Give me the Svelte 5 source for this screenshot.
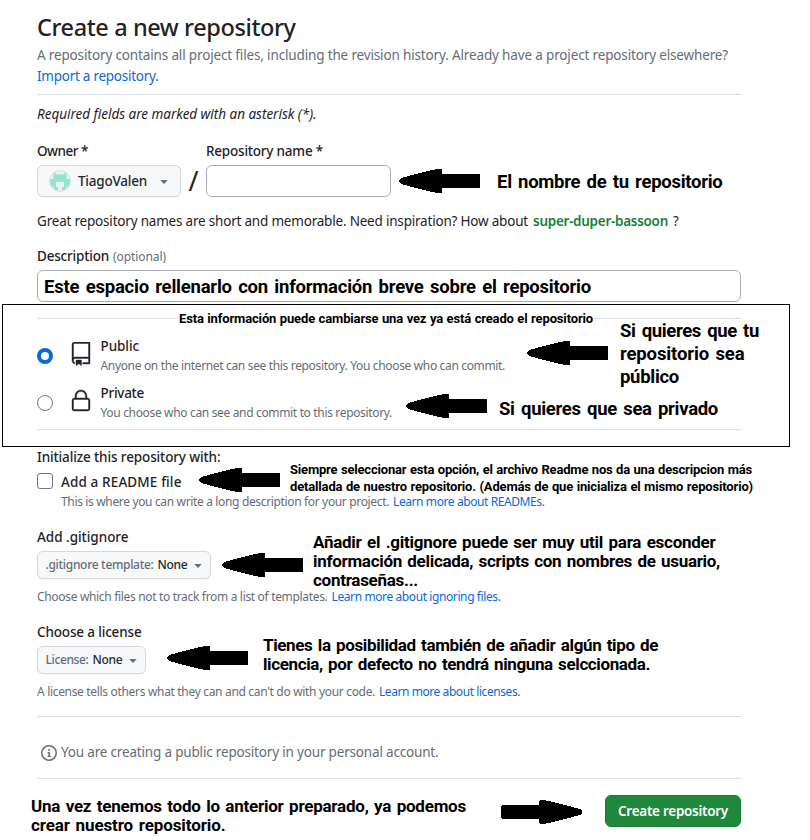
<script>
  // Spreads the letters of a line so that it takes up the given width.
  function fit(node, width) {
    const natural = node.getBoundingClientRect().width;
    node.style.letterSpacing = `${(width - natural) / node.textContent.length}px`;
  }

  const notes = [
    { x: 497, y: 171, size: 'large', lines: [['El nombre de tu repositorio', 225.5]] },
    { x: 44, y: 276, size: 'large', lines: [['Este espacio rellenarlo con información breve sobre el repositorio', 547]] },
    { x: 179, y: 310, size: 'small', lines: [['Esta información puede cambiarse una vez ya está creado el repositorio', 414]] },
    { x: 620, y: 320, size: 'large', lines: [['Si quieres que tu', 139], ['repositorio sea', 124.5], ['público', 59]] },
    { x: 499, y: 398, size: 'large', lines: [['Si quieres que sea privado', 219]] },
    { x: 290, y: 461, size: 'small', lines: [['Siempre seleccionar esta opción, el archivo Readme nos da una descripcion más', 462], ['detallada de nuestro repositorio. (Además de que inicializa el mismo repositorio)', 463]] },
    { x: 313, y: 533, size: 'medium', lines: [['Añadir el .gitignore puede ser muy util para esconder', 402.5], ['información delicada, scripts con nombres de usuario,', 407], ['contraseñas...', 105]] },
    { x: 263, y: 636, size: 'medium', lines: [['Tienes la posibilidad también de añadir algún tipo de', 395], ['licencia, por defecto no tendrá ninguna selccionada.', 387]] },
    { x: 31, y: 797, size: 'medium', lines: [['Una vez tenemos todo lo anterior preparado, ya podemos', 435], ['crear nuestro repositorio.', 194.5]] },
  ];

  const arrows = [
    { x: 399, y: 169 },
    { x: 527, y: 341 },
    { x: 406, y: 394 },
    { x: 199, y: 468 },
    { x: 222, y: 553 },
    { x: 167, y: 646 },
    { x: 501, y: 800, right: true },
  ];
</script>

{#snippet caret()}
  <svg class="caret" width="8" height="4" viewBox="0 0 8 4"><path d="M0.3 0h7.4L4.3 3.7a.45.45 0 0 1-.6 0Z" /></svg>
{/snippet}

<div class="page">
  <main>
    <h1><span use:fit={258.5}>Create a new repository</span></h1>
    <p class="lead muted">
      <span use:fit={691}>A repository contains all project files, including the revision history. Already have a project repository elsewhere?</span>
    </p>
    <p class="lead"><a href="#import" use:fit={121.5}>Import a repository.</a></p>
    <hr class="after-lead" />

    <p class="required"><span use:fit={279.5}>Required fields are marked with an asterisk (*).</span></p>

    <div class="names">
      <div class="owner">
        <div class="label"><span use:fit={51}>Owner *</span></div>
        <button class="select">
          <svg class="avatar" width="22" height="22" viewBox="0 0 22 22">
            <defs><clipPath id="round"><circle cx="11" cy="11" r="10" /></clipPath></defs>
            <circle cx="11" cy="11" r="10.4" fill="#f0f0f0" stroke="#d9dce0" stroke-width="1" />
            <g clip-path="url(#round)">
              <path fill="#93e6cd" d="M3.500 2h3v2.500h9V2h3v2.500H17.700V9H21v8h-4v3h-4v-3h2v-5H7v5h2v3H5v-3H1V9H4.300V4.500H3.500Z" />
            </g>
          </svg>
          <span class="user"><span use:fit={69}>TiagoValen</span></span>
          {@render caret()}
        </button>
      </div>
      <span class="slash">/</span>
      <div class="repo">
        <div class="label"><span use:fit={117}>Repository name *</span></div>
        <div class="input"></div>
      </div>
    </div>

    <p class="hint">
      <span use:fit={491}>Great repository names are short and memorable. Need inspiration? How about</span>
      <b use:fit={135}>super-duper-bassoon</b>
      <span>?</span>
    </p>

    <div class="label description">
      <span use:fit={72}>Description</span>
      <small use:fit={53}>(optional)</small>
    </div>
    <div class="input wide"></div>
    <hr class="after-description" />

    <div class="choice">
      <i class="radio checked"></i>
      <svg width="24" height="24" viewBox="0 0 24 24"><path d="M3 2.750A2.750 2.750 0 0 1 5.750 0h14.500a.75.75 0 0 1 .75.75v20.500a.75.75 0 0 1-.75.75h-6a.75.75 0 0 1 0-1.500h5.250v-4H6A1.500 1.500 0 0 0 4.500 18v.75c0 .716.43 1.334 1.050 1.605a.75.75 0 0 1-.6 1.374A3.251 3.251 0 0 1 3 18.750ZM19.500 1.500H5.750c-.69 0-1.250.56-1.250 1.250v12.651A2.989 2.989 0 0 1 6 15h13.500Z" /><path d="M7 18.250a.25.25 0 0 1 .25-.25h5a.25.25 0 0 1 .25.25v5.010a.25.25 0 0 1-.397.201l-2.206-1.604a.25.25 0 0 0-.294 0L7.397 23.460a.25.25 0 0 1-.397-.2v-5.010Z" /></svg>
      <div>
        <div class="label"><span use:fit={38.5}>Public</span></div>
        <p class="note"><span use:fit={404.5}>Anyone on the internet can see this repository. You choose who can commit.</span></p>
      </div>
    </div>
    <div class="choice">
      <i class="radio"></i>
      <svg width="24" height="24" viewBox="0 0 24 24"><path d="M6 9V7.250C6 3.845 8.503 1 12 1s6 2.845 6 6.250V9h.5a2.500 2.500 0 0 1 2.500 2.500v8a2.500 2.500 0 0 1-2.500 2.500h-13A2.500 2.500 0 0 1 3 19.500v-8A2.500 2.500 0 0 1 5.500 9Zm-1.500 2.500v8a1 1 0 0 0 1 1h13a1 1 0 0 0 1-1v-8a1 1 0 0 0-1-1h-13a1 1 0 0 0-1 1Zm3-4.250V9h9V7.250c0-2.670-1.922-4.750-4.500-4.750-2.578 0-4.500 2.080-4.500 4.750Z" /></svg>
      <div>
        <div class="label"><span use:fit={43.5}>Private</span></div>
        <p class="note"><span use:fit={291.5}>You choose who can see and commit to this repository.</span></p>
      </div>
    </div>
    <hr class="after-choices" />

    <div class="label init"><span use:fit={183.5}>Initialize this repository with:</span></div>
    <div class="readme">
      <i class="checkbox"></i>
      <div>
        <div class="label"><span use:fit={120.5}>Add a README file</span></div>
        <p class="note">
          <span use:fit={328}>This is where you can write a long description for your project.</span>
          <a href="#readmes" use:fit={151.5}>Learn more about READMEs.</a>
        </p>
      </div>
    </div>

    <section class="gitignore">
      <div class="label"><span use:fit={91.5}>Add .gitignore</span></div>
      <button class="select compact">
        <span class="prefix" use:fit={108}>.gitignore template:</span>
        <span use:fit={30}>None</span>
        {@render caret()}
      </button>
      <p class="note">
        <span use:fit={290.5}>Choose which files not to track from a list of templates.</span>
        <a href="#ignoring" use:fit={169}>Learn more about ignoring files.</a>
      </p>
    </section>

    <section class="license">
      <div class="label"><span use:fit={104.5}>Choose a license</span></div>
      <button class="select compact">
        <span class="prefix" use:fit={43}>License:</span>
        <span use:fit={30}>None</span>
        {@render caret()}
      </button>
      <p class="note">
        <span use:fit={338}>A license tells others what they can and can't do with your code.</span>
        <a href="#licenses" use:fit={141}>Learn more about licenses.</a>
      </p>
    </section>

    <hr class="after-license" />
    <p class="info muted">
      <svg width="16" height="16" viewBox="0 0 16 16"><path d="M0 8a8 8 0 1 1 16 0A8 8 0 0 1 0 8Zm8-6.500a6.500 6.500 0 1 0 0 13 6.500 6.500 0 0 0 0-13ZM6.500 7.750A.75.75 0 0 1 7.250 7h1a.75.75 0 0 1 .75.75v2.750h.25a.75.75 0 0 1 0 1.500h-2a.75.75 0 0 1 0-1.500h.25v-2h-.25a.75.75 0 0 1-.75-.75ZM8 6a1 1 0 1 1 0-2 1 1 0 0 1 0 2Z" /></svg>
      <span use:fit={377.5}>You are creating a public repository in your personal account.</span>
    </p>
    <hr class="after-info" />
    <footer>
      <button class="create"><span use:fit={110}>Create repository</span></button>
    </footer>
  </main>

  <div class="frame"></div>

  {#each notes as note}
    <div class="annotation {note.size}" style:left="{note.x}px" style:top="{note.y}px">
      {#each note.lines as [text, width]}
        <div><span use:fit={width}>{text}</span></div>
      {/each}
    </div>
  {/each}

  {#each arrows as arrow}
    <svg class="arrow" class:right={arrow.right} style:left="{arrow.x}px" style:top="{arrow.y}px" width="81" height="24" viewBox="0 0 81 24">
      <path shape-rendering="crispEdges" d="M0 11 2 9 6 8 13 6 21 4 29 2 38 0H42L43 1V5H80L81 6V18L80 19H43V23L42 24H38L29 22 21 20 13 18 6 16 2 15 0 13Z" />
    </svg>
  {/each}
</div>

<style>
  :global(body) {
    background: #fff;
  }
  .page {
    position: relative;
    width: 810px;
    height: 840px;
    overflow: hidden;
    color: #1f2328;
    font: 400 13.5px/20px 'Noto Sans', 'Open Sans', sans-serif;
    white-space: nowrap;
  }
  main {
    display: flex;
    flex-direction: column;
    width: 704px;
    padding: 11px 0 0 37px;
  }
  h1,
  p {
    margin: 0;
    font-weight: 400;
  }
  h1 {
    height: 34px;
    font-size: 23.5px;
    line-height: 32px;
    font-weight: 500;
  }
  a {
    color: #0969da;
    text-decoration: none;
  }
  svg {
    display: block;
    flex: none;
  }
  hr {
    width: 100%;
    height: 1px;
    margin: 0;
    border: 0;
    background: #d8dee4;
  }
  .muted {
    color: #656d76;
  }
  .lead {
    line-height: 21px;
  }
  .after-lead {
    margin: 7px 0 9px;
  }
  .required {
    font-style: italic;
    margin-bottom: 17px;
  }
  .label {
    height: 20px;
    font-weight: 500;
  }
  .names {
    display: flex;
    align-items: flex-end;
  }
  .names .label {
    margin-bottom: 4px;
  }
  .select {
    display: flex;
    align-items: center;
    box-sizing: border-box;
    height: 32px;
    margin: 0;
    padding: 0 0 0 11px;
    border: 1px solid #d5d8dc;
    border-radius: 6px;
    background: #f6f8fa;
    box-shadow: 0 1px 0 rgba(31, 35, 40, 0.04);
    color: #24292f;
    font: inherit;
    font-weight: 500;
    text-align: left;
  }
  .owner .select {
    width: 144px;
  }
  .user {
    width: 75px;
    margin: 0 7px;
  }
  .caret {
    fill: #656d76;
    margin-top: 1px;
  }
  .slash {
    width: 25px;
    height: 32px;
    font-size: 27px;
    line-height: 31px;
    text-align: center;
  }
  .repo {
    width: 185px;
  }
  .input {
    box-sizing: border-box;
    height: 32px;
    border: 1px solid #a8aeb8;
    border-radius: 6px;
    background: #fff;
  }
  .hint {
    display: flex;
    gap: 5px;
    margin-top: 14px;
  }
  .hint b {
    color: #1a7f37;
    font-weight: 600;
  }
  .description {
    display: flex;
    gap: 4px;
    margin: 15px 0 4px;
  }
  .description small {
    color: #656d76;
    font-size: 12px;
    font-weight: 400;
    line-height: 21px;
  }
  .after-description {
    margin: 16px 0 17px;
  }
  .choice {
    display: flex;
    height: 47px;
  }
  .choice svg {
    margin: 6px 7.5px 0 16px;
    fill: #1f2328;
    stroke: #1f2328;
    stroke-width: 0.4;
  }
  .radio {
    box-sizing: border-box;
    width: 16px;
    height: 16px;
    margin-top: 12px;
    border: 1px solid #6e7781;
    border-radius: 50%;
  }
  .radio.checked {
    border: 4px solid #0969da;
  }
  .note {
    display: flex;
    gap: 4px;
    height: 20px;
    color: #656d76;
    font-size: 12px;
  }
  .after-choices {
    margin: -1px 0 17px;
  }
  .init {
    margin-bottom: 5px;
  }
  .readme {
    display: flex;
    gap: 8px;
    height: 55px;
  }
  .checkbox {
    box-sizing: border-box;
    width: 16px;
    height: 16px;
    margin-top: 1px;
    border: 1px solid #6e7781;
    border-radius: 3px;
  }
  section {
    height: 95px;
  }
  .select.compact {
    height: 28px;
    margin: 4px 0 8px;
    padding-left: 7.5px;
    font-size: 12px;
    gap: 4px;
    color: #24292f;
  }
  .compact .prefix {
    color: #656d76;
  }
  .compact .caret {
    margin-left: 2.5px;
  }
  .gitignore .select {
    width: 174px;
  }
  .license .select {
    width: 109px;
  }
  .license {
    height: 94px;
  }
  .info {
    display: flex;
    align-items: center;
    gap: 4px;
    margin: 25px 0 16px;
    padding-left: 4px;
  }
  .info svg {
    fill: #656d76;
    margin-top: 2px;
  }
  footer {
    display: flex;
    justify-content: flex-end;
    margin-top: 16px;
  }
  .create {
    box-sizing: border-box;
    width: 136px;
    height: 32px;
    padding: 0;
    border: 1px solid #1c7c36;
    border-radius: 6px;
    background: #1f883d;
    color: #fff;
    font: inherit;
    font-weight: 600;
  }
  .frame {
    position: absolute;
    left: 2px;
    top: 304px;
    box-sizing: border-box;
    width: 788px;
    height: 143px;
    border: 1px solid #000;
  }
  .annotation {
    position: absolute;
    color: #000;
    font-family: Roboto, 'Liberation Sans', sans-serif;
    font-weight: 700;
  }
  .large {
    font-size: 18.5px;
    line-height: 23px;
    word-spacing: 2px;
  }
  .medium {
    font-size: 17px;
    line-height: 19px;
    word-spacing: 1.5px;
  }
  .small {
    padding: 0 1px;
    margin-left: -1px;
    font-size: 13px;
    line-height: 17px;
    word-spacing: 0.5px;
    background: #fff;
  }
  .arrow {
    position: absolute;
  }
  .arrow.right {
    transform: scaleX(-1);
  }
</style>
